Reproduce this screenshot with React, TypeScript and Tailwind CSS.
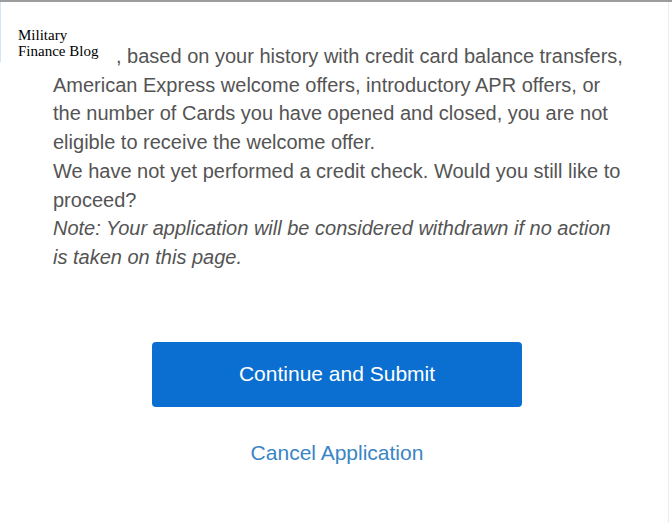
import React from "react";

export default function App() {
  return (
    <div className="relative w-[672px] h-[523px] bg-white border-t-2 border-[#9c9c9c] overflow-hidden">
      <div className="absolute right-[3px] top-0 bottom-0 w-px bg-[#ececec]" />
      <div className="absolute left-0 top-0 h-[60px] w-px bg-[#d6e6f5]" />
      <div
        className="absolute left-[18px] top-[25px] text-[15px] leading-[16px] text-black"
        style={{ fontFamily: '"Liberation Serif", "Times New Roman", serif' }}
      >
        Military
        <br />
        Finance Blog
      </div>
      <div
        className="pt-[40px] pl-[53px] text-[20px] leading-[28.7px] text-[#545454] whitespace-nowrap"
        style={{ fontFamily: '"Liberation Sans", Arial, sans-serif' }}
      >
        <div className="pl-[63px]">, based on your history with credit card balance transfers,</div>
        <div>American Express welcome offers, introductory APR offers, or</div>
        <div>the number of Cards you have opened and closed, you are not</div>
        <div>eligible to receive the welcome offer.</div>
        <div>We have not yet performed a credit check. Would you still like to</div>
        <div>proceed?</div>
        <div className="italic">Note: Your application will be considered withdrawn if no action</div>
        <div className="italic">is taken on this page.</div>
      </div>
      <div
        className="flex flex-col items-center pl-[2px] mt-[70px]"
        style={{ fontFamily: '"Liberation Sans", Arial, sans-serif' }}
      >
        <button className="w-[370px] h-[65px] rounded-[4px] bg-[#0a6fd0] text-white text-[21px]">
          Continue and Submit
        </button>
        <div className="mt-[32px] text-[21px] leading-[28px] text-[#3a85c4]">Cancel Application</div>
      </div>
    </div>
  );
}
